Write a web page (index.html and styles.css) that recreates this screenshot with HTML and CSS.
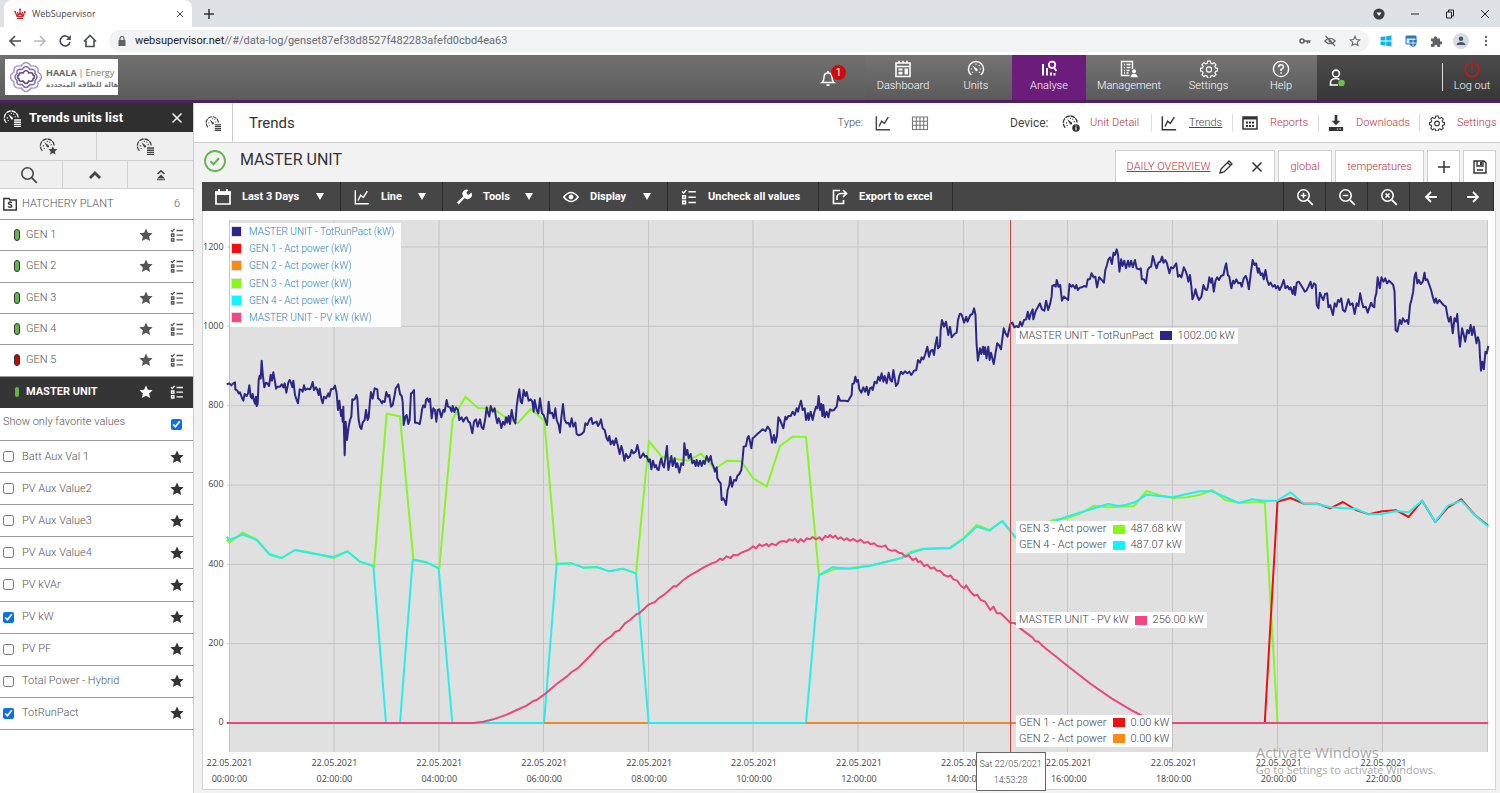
FILE: index.html
```html
<!DOCTYPE html>
<html lang="en">
<head>
<meta charset="utf-8">
<title>WebSupervisor</title>
<link rel="stylesheet" href="styles.css">
</head>
<body>
<svg class="defs" aria-hidden="true">
  <symbol id="gauge" viewBox="0 0 18 18"><path d="M3.6 14.6A7.3 7.3 0 1 1 16 9" fill="none" stroke="currentColor" stroke-width="1.4" stroke-dasharray="5 .8"/><path d="M5.6 5.4l4 3.2a1.3 1.3 0 1 1-1.5 1.5z" fill="currentColor"/><path d="M8.8 4v1.2M11.8 5l-.7 1M4 9.4h1.4M13.5 8l-1.2.5M5 12.5l1-.7" stroke="currentColor" stroke-width="1.1"/></symbol>
  <symbol id="gauge-list" viewBox="0 0 18 18"><use href="#gauge" width="17" height="17"/><path d="M11 11h7M11 13.2h7M11 15.4h7M11 17.4h7" stroke="currentColor" stroke-width="1.4"/></symbol>
  <symbol id="gauge-star" viewBox="0 0 18 18"><use href="#gauge" width="17" height="17"/><path d="M13.8 9.300l1.300 2.700 3 .3-2.200 2.100.6 3.100-2.700-1.500-2.700 1.500.6-3.100-2.200-2.100 3-.3z" fill="currentColor"/></symbol>
  <symbol id="gauge-info" viewBox="0 0 18 18"><use href="#gauge" width="17" height="17"/><circle cx="14" cy="14" r="3.8" fill="currentColor"/><path d="M14 11.5v1M14 13.3v3" stroke="#fff" stroke-width="1.2"/></symbol>
  <symbol id="gauge-full" viewBox="0 0 18 18"><path d="M4.2 15A7.6 7.6 0 1 1 13.8 15" fill="none" stroke="currentColor" stroke-width="1.4"/><path d="M5.6 5.4l4 3.2a1.3 1.3 0 1 1-1.5 1.5zM7 16h4" fill="currentColor"/><path d="M9 3.6v1.2M12.5 5l-.7 1M3.8 9h1.4M14.2 9h-1.4M5 12.8l1-.7M13 12.8l-1-.7" stroke="currentColor" stroke-width="1.2"/></symbol>
  <symbol id="linechart" viewBox="0 0 18 18"><path d="M1.5 1.5v15h15.500M4.500 13l3-6 3 2.500 4.500-7" fill="none" stroke="currentColor" stroke-width="1.6"/></symbol>
  <symbol id="gridicon" viewBox="0 0 18 18"><path d="M1.500 3h15v12.500h-15zM1.500 7.200h15M1.500 11.300h15M5.300 3v12.500M9 3v12.500M12.700 3v12.500" fill="none" stroke="currentColor" stroke-width="1.100"/></symbol>
  <symbol id="gear" viewBox="0 0 18 18"><path d="M7.600 1.200h2.800l.4 2 1.500.6 1.800-1.100 1.900 2-1.100 1.700.6 1.500 2 .4v2.600l-2 .5-.6 1.500 1.100 1.800-1.900 1.900-1.800-1.100-1.500.6-.4 2H7.600l-.4-2-1.500-.6-1.800 1.100L2 14.700l1.100-1.800-.6-1.500-2-.5V8.300l2-.4.6-1.500L2 4.700l1.900-2 1.800 1.100 1.500-.6z" fill="none" stroke="currentColor" stroke-width="1.200"/><circle cx="9" cy="9.500" r="2.600" fill="none" stroke="currentColor" stroke-width="1.200"/></symbol>
  <symbol id="star" viewBox="0 0 14 14"><path d="M7 .6l1.900 4.200 4.700.5-3.500 3.100 1 4.700L7 10.700l-4.100 2.400 1-4.700L.4 5.300l4.700-.5z" fill="currentColor"/></symbol>
  <symbol id="checks" viewBox="0 0 14 14"><path d="M1 2.200l1.300 1.400L4.600.8M6.500 2.500H13M6.500 7.200H13M6.500 11.800H13M1.500 6h2.400v2.400H1.500zM1.500 10.600h2.400V13H1.500z" fill="none" stroke="currentColor" stroke-width="1.300"/></symbol>
  <symbol id="close" viewBox="0 0 12 12"><path d="M1.500 1.500l9 9M10.500 1.500l-9 9" stroke="currentColor" stroke-width="1.500"/></symbol>
  <symbol id="zoomlens" viewBox="0 0 18 18"><circle cx="7.500" cy="7.500" r="5.700" fill="none" stroke="currentColor" stroke-width="1.600"/><path d="M11.800 11.800l5 5" stroke="currentColor" stroke-width="1.800"/></symbol>
</svg>

<div class="tabbar">
  <div class="tab">
    <svg class="i12" viewBox="0 0 12 12"><path d="M3 8.500L1.500 4.500M3 8.500L6 5l3 3.500M4 7L3.500 4M8 7l.5-3M9 8.500l1.500-4M6 5V2M3 10.300h6M3 8.500h6" fill="none" stroke="#d0212b" stroke-width="1.200"/><g fill="#d0212b"><circle cx="6" cy="1.600" r="1"/><circle cx="1.200" cy="4" r="1"/><circle cx="10.800" cy="4" r="1"/></g></svg>
    <span>WebSupervisor</span>
    <button class="plain" aria-label="Close tab"><svg class="i8" viewBox="0 0 12 12"><use href="#close"/></svg></button>
  </div>
  <button class="plain newtab" aria-label="New tab"><svg class="i12" viewBox="0 0 12 12"><path d="M6 1v10M1 6h10" stroke="#333" stroke-width="1.500"/></svg></button>
  <div class="winctl">
    <svg class="i12" viewBox="0 0 12 12"><circle cx="6" cy="6" r="5.600" fill="#3c4043"/><path d="M3.500 4.500h5L6 8z" fill="#fff"/></svg>
    <svg class="i10" viewBox="0 0 10 10"><path d="M1 5h8" stroke="#222"/></svg>
    <svg class="i10" viewBox="0 0 10 10"><path d="M1.500 3h5v6h-5zM3.500 3V1h5v6h-2" fill="none" stroke="#222"/></svg>
    <svg class="i10" viewBox="0 0 10 10"><path d="M1 1l8 8M9 1L1 9" stroke="#222"/></svg>
  </div>
</div>

<div class="addressbar">
  <button class="plain" aria-label="Back"><svg class="i14" viewBox="0 0 14 14"><path d="M13 7H2M7 2L2 7l5 5" fill="none" stroke="#4a4d51" stroke-width="1.600"/></svg></button>
  <button class="plain" aria-label="Forward"><svg class="i14" viewBox="0 0 14 14"><path d="M1 7h11M7 2l5 5-5 5" fill="none" stroke="#b6b8ba" stroke-width="1.600"/></svg></button>
  <button class="plain" aria-label="Reload"><svg class="i14" viewBox="0 0 14 14"><path d="M11.500 4.500A5 5 0 1 0 12 8" fill="none" stroke="#4a4d51" stroke-width="1.600"/><path d="M12.800 1v5H8z" fill="#4a4d51"/></svg></button>
  <button class="plain" aria-label="Home"><svg class="i14" viewBox="0 0 14 14"><path d="M1 7.500L7 1.500l6 6M3 6.500v6h8v-6" fill="none" stroke="#4a4d51" stroke-width="1.600"/></svg></button>
  <div class="omnibox">
    <svg class="i10" viewBox="0 0 10 10"><path d="M1.500 4h7v6h-7z" fill="#5f6368"/><path d="M3 4.500V2.500a2 2 0 0 1 4 0v2" fill="none" stroke="#5f6368" stroke-width="1.200"/></svg>
    <p class="url"><b>websupervisor.net</b>//#/data-log/genset87ef38d8527f482283afefd0cbd4ea63</p>
    <svg class="i12" viewBox="0 0 12 12"><circle cx="3" cy="6" r="2" fill="none" stroke="#5f6368" stroke-width="1.600"/><path d="M5 6h6.500M8.500 6v2.500M10.500 6v2" stroke="#5f6368" stroke-width="1.600"/></svg>
    <svg class="i12" viewBox="0 0 12 12"><path d="M.8 6Q6 .5 11.200 6 6 11.500.8 6zM1.500 1l9.500 10" fill="none" stroke="#5f6368" stroke-width="1.200"/><circle cx="6" cy="6" r="1.500" fill="#5f6368"/></svg>
    <svg class="i12" viewBox="0 0 14 14"><path d="M7 1.500l1.600 3.700 4 .4-3 2.700.9 4L7 10.200l-3.500 2.100.9-4-3-2.700 4-.4z" fill="none" stroke="#5f6368" stroke-width="1.200"/></svg>
  </div>
  <div class="exts">
    <svg class="i12" viewBox="0 0 12 12"><path d="M.5 2L5.500 1.300v4.300h-5zM6.200 1.200L11.500.5v5.100H6.200zM.5 6.400h5v4.300L.5 10zM6.200 6.400h5.300v5.100l-5.300-.7z" fill="#12b2e8"/></svg>
    <svg class="i12" viewBox="0 0 12 12"><path d="M1 1h10v8H1z" fill="#d9ebf8" stroke="#2b78b5"/><path d="M1 1h10v2.500H1z" fill="#2b78b5"/><path d="M4.500 5h7v3q-.5 3-3.500 4-3-1-3.500-4z" fill="#1d75bd"/><path d="M8 5v6.500M4.500 8h7" stroke="#fff" stroke-width=".8"/></svg>
    <svg class="i12" viewBox="0 0 12 12"><path d="M1 3.500h3a1.600 1.600 0 1 1 3 0h3v3a1.500 1.500 0 1 1 0 2.800V12H7.200a1.400 1.400 0 1 0-2.600 0H1V9a1.400 1.400 0 1 0 0-2.700z" fill="#5f6368"/></svg>
    <svg class="i16 avatar" viewBox="0 0 16 16"><circle cx="8" cy="8" r="8" fill="#dadce4"/><circle cx="8" cy="5.800" r="2.200" fill="#4e5268"/><path d="M3.500 12Q4 9 8 9t4.500 3z" fill="#4e5268"/></svg>
    <svg class="i12" viewBox="0 0 12 12"><g fill="#5f6368"><circle cx="6" cy="2" r="1.200"/><circle cx="6" cy="6" r="1.200"/><circle cx="6" cy="10" r="1.200"/></g></svg>
  </div>
</div>

<header class="apphead">
  <div class="logo">
    <svg class="logomark" viewBox="0 0 32 32" fill="none" stroke="#8a6db0"><path d="M11 5Q16-2 21 5q8-1 7 6 7 5 0 10 1 7-7 6-5 7-10 0-8 1-7-6-7-5 0-10-1-7 7-6z" stroke="#a797c0" stroke-width="1.500"/><path d="M12 8.500q4-6 8 0 6-1 5 4 4 3.500 0 7 1 5-5 4-4 6-8 0-6 1-5-4-4-3.500 0-7-1-5 5-4z" stroke-width="1.600"/><path d="M13 12q3-5 6 0 4-1 4 2 3 2 0 4 0 3-4 2-3 5-6 0-4 1-4-2-3-2 0-4 0-3 4-2z" stroke="#5f4a86" stroke-width="1.600"/></svg>
    <div><p class="brand"><b>HAALA</b><span>|</span>Energy</p><p class="brandar" dir="rtl" lang="ar">هالة للطاقة المتجددة</p></div>
  </div>
  <button class="plain bell" aria-label="Notifications"><svg class="i18" viewBox="0 0 18 18"><path d="M3 13.500q2-1.500 2-5 0-4.500 4-4.500t4 4.500q0 3.500 2 5zM9 2v2M7.500 15.500q1.500 1.500 3 0" fill="none" stroke="#fff" stroke-width="1.500"/></svg><span class="badge">1</span></button>
  <nav class="mainnav">
    <a href="#"><svg class="i18" viewBox="0 0 18 18"><path d="M2 3h14v13.500H2zM2 6.500h14M5 .8v3M9 .8v3M13 .8v3" fill="none" stroke="currentColor" stroke-width="1.600"/><path d="M4.500 8.500h4v2h-4zM4.500 11.800h4v2.600h-4zM10.500 8.500h3.500v6h-3.500z" fill="currentColor"/></svg>Dashboard</a>
    <a href="#"><svg class="i18"><use href="#gauge-full"/></svg>Units</a>
    <a href="#" class="active"><svg class="i18" viewBox="0 0 18 18"><path d="M3 4v11.500M7 8v7.500M11 12.500v3M14.500 13v2.500" stroke="currentColor" stroke-width="2"/><circle cx="12" cy="4.800" r="3.200" fill="none" stroke="currentColor" stroke-width="1.800"/><path d="M14 7.500l2.500 3.500" stroke="currentColor" stroke-width="1.800"/></svg>Analyse</a>
    <a href="#"><svg class="i18" viewBox="0 0 18 18"><path d="M9.500 15.500H1.500V1.500h11v7.500M4 4.500h1M6.500 4.500h4M4 7.500h1M6.500 7.500h4M4 10.500h1M6.500 10.500h3M4 13h1M6.500 13h2" fill="none" stroke="currentColor" stroke-width="1.400"/><circle cx="14" cy="11.300" r="2" fill="currentColor"/><path d="M10.500 17.200q.5-3.400 3.500-3.400t3.800 3.400z" fill="currentColor"/></svg>Management</a>
    <a href="#"><svg class="i18"><use href="#gear"/></svg>Settings</a>
    <a href="#"><svg class="i18" viewBox="0 0 18 18"><circle cx="9" cy="9" r="7.600" fill="none" stroke="currentColor" stroke-width="1.400"/><path d="M6.500 7.200Q6.700 4.700 9 4.700t2.400 2.200Q11.400 8.300 9 9.500V11M9 12.200v1.500" fill="none" stroke="currentColor" stroke-width="1.500"/></svg>Help</a>
  </nav>
  <div class="userbox">
    <button class="plain" aria-label="User"><svg class="i18" viewBox="0 0 18 18"><circle cx="8" cy="4.500" r="3.400" fill="none" stroke="#fff" stroke-width="1.600"/><path d="M10 16H2.500v-2.500Q3 9.500 8 9.500q2 0 3.500 1" fill="none" stroke="#fff" stroke-width="1.600"/><circle cx="13.500" cy="14" r="3.300" fill="#6cc04a"/></svg></button>
    <a href="#" class="logout"><svg class="i18" viewBox="0 0 18 18"><path d="M5.500 3.500A7 7 0 1 0 12.500 3.500M9 .5V9" fill="none" stroke="#c01a1a" stroke-width="1.800"/></svg>Log out</a>
  </div>
</header>

<div class="body">
  <aside class="side">
    <div class="sidetitle"><svg class="i18"><use href="#gauge-list"/></svg><h2>Trends units list</h2><button class="plain" aria-label="Close list"><svg class="i12"><use href="#close"/></svg></button></div>
    <div class="pair"><button aria-label="Favourite units"><svg class="i18"><use href="#gauge-star"/></svg></button><button aria-label="All units"><svg class="i18"><use href="#gauge-list"/></svg></button></div>
    <div class="pair three"><button aria-label="Search"><svg class="i18"><use href="#zoomlens"/></svg></button><button aria-label="Collapse"><svg class="i14" viewBox="0 0 14 14"><path d="M2 10l5-5 5 5" fill="none" stroke="currentColor" stroke-width="2.800"/></svg></button><button aria-label="Collapse all"><svg class="i12" viewBox="0 0 12 12"><path d="M2.500 5L6 1.800 9.500 5" fill="none" stroke="currentColor" stroke-width="1.600"/><path d="M6 5.500l4 4H2zM2 10.300h8v1H2z" fill="currentColor"/></svg></button></div>
    <div class="plant"><svg class="i14" viewBox="0 0 14 14"><path d="M.8 1.500H6L7 3h6.300v10H.8z" fill="none" stroke="#333" stroke-width="1.400"/><path d="M8.800 6Q8.500 5 7.200 5T5.400 6.200q0 1 1.700 1.400T8.900 9q0 1.300-1.800 1.300T5.200 9.300" fill="none" stroke="#333" stroke-width="1.400"/></svg><span>HATCHERY PLANT</span><span class="count">6</span></div>
    <ul class="units">
      <li><i class="lamp"></i><span>GEN 1</span><svg class="i14"><use href="#star"/></svg><svg class="i14"><use href="#checks"/></svg></li>
      <li><i class="lamp"></i><span>GEN 2</span><svg class="i14"><use href="#star"/></svg><svg class="i14"><use href="#checks"/></svg></li>
      <li><i class="lamp"></i><span>GEN 3</span><svg class="i14"><use href="#star"/></svg><svg class="i14"><use href="#checks"/></svg></li>
      <li><i class="lamp"></i><span>GEN 4</span><svg class="i14"><use href="#star"/></svg><svg class="i14"><use href="#checks"/></svg></li>
      <li><i class="lamp red"></i><span>GEN 5</span><svg class="i14"><use href="#star"/></svg><svg class="i14"><use href="#checks"/></svg></li>
      <li class="sel"><i class="lamp"></i><span>MASTER UNIT</span><svg class="i14"><use href="#star"/></svg><svg class="i14"><use href="#checks"/></svg></li>
    </ul>
    <label class="favonly"><span>Show only favorite values</span><input type="checkbox" checked></label>
    <ul class="values">
      <li><label><input type="checkbox">Batt Aux Val 1</label><svg class="i14"><use href="#star"/></svg></li>
      <li><label><input type="checkbox">PV Aux Value2</label><svg class="i14"><use href="#star"/></svg></li>
      <li><label><input type="checkbox">PV Aux Value3</label><svg class="i14"><use href="#star"/></svg></li>
      <li><label><input type="checkbox">PV Aux Value4</label><svg class="i14"><use href="#star"/></svg></li>
      <li><label><input type="checkbox">PV kVAr</label><svg class="i14"><use href="#star"/></svg></li>
      <li><label><input type="checkbox" checked>PV kW</label><svg class="i14"><use href="#star"/></svg></li>
      <li><label><input type="checkbox">PV PF</label><svg class="i14"><use href="#star"/></svg></li>
      <li><label><input type="checkbox">Total Power - Hybrid</label><svg class="i14"><use href="#star"/></svg></li>
      <li><label><input type="checkbox" checked>TotRunPact</label><svg class="i14"><use href="#star"/></svg></li>
    </ul>
  </aside>

  <main class="main">
    <div class="subhead">
      <div class="subicon"><svg class="i16"><use href="#gauge-list"/></svg></div>
      <h1>Trends</h1>
      <span class="type">Type:</span>
      <button class="plain" aria-label="Line chart"><svg class="i16"><use href="#linechart"/></svg></button>
      <button class="plain tablebtn" aria-label="Table"><svg class="i18"><use href="#gridicon"/></svg></button>
      <span class="device">Device:</span>
      <nav class="devnav">
        <a href="#"><svg class="i18"><use href="#gauge-info"/></svg><span>Unit Detail</span></a>
        <a href="#" class="current"><svg class="i16"><use href="#linechart"/></svg><span>Trends</span></a>
        <a href="#"><svg class="i16" viewBox="0 0 16 16"><path d="M1 2h14v12H1z" fill="none" stroke="currentColor" stroke-width="1.500"/><path d="M1 2h14v2.500H1zM4 6.500h2v2H4zM7 6.500h2v2H7zM10 6.500h2v2h-2zM4 10h2v2H4zM7 10h2v2H7zM10 10h2v2h-2z" fill="currentColor"/></svg><span>Reports</span></a>
        <a href="#"><svg class="i16" viewBox="0 0 18 18"><path d="M7.500 0h3v6.500h3.200L9 11.500 4.300 6.500h3.200zM1 13.500h16V18H1z" fill="currentColor"/><path d="M10 15.800h1.500M13 15.800h1.500" stroke="#fff" stroke-width="1.200"/></svg><span>Downloads</span></a>
        <a href="#"><svg class="i16"><use href="#gear"/></svg><span>Settings</span></a>
      </nav>
    </div>

    <div class="unitbar">
      <svg class="i22" viewBox="0 0 22 22"><circle cx="11" cy="11" r="10" fill="none" stroke="#62b74a" stroke-width="1.800"/><path d="M6.500 11.300l3 3 5.500-6" fill="none" stroke="#62b74a" stroke-width="2"/></svg>
      <h2>MASTER UNIT</h2>
      <div class="views">
        <div class="view first"><a href="#" class="on">DAILY OVERVIEW</a><button class="plain" aria-label="Rename"><svg class="i14" viewBox="0 0 14 14"><path d="M1 13l1-4 8-8 3 3-8 8zM8.500 2.500l3 3" fill="none" stroke="currentColor" stroke-width="1.300"/></svg></button><button class="plain" aria-label="Remove"><svg class="i12"><use href="#close"/></svg></button></div>
        <div class="view"><a href="#">global</a></div>
        <div class="view wide"><a href="#">temperatures</a></div>
        <button class="view" aria-label="Add view"><svg class="i14" viewBox="0 0 14 14"><path d="M7 1v12M1 7h12" stroke="currentColor" stroke-width="1.500"/></svg></button>
        <button class="view" aria-label="Save view"><svg class="i14" viewBox="0 0 14 14"><path d="M1 1h10l2 2v10H1zM4 1v5h6V1M4 10h6" fill="none" stroke="currentColor" stroke-width="1.400"/><path d="M7 2h2v3H7z" fill="currentColor"/></svg></button>
      </div>
    </div>

    <div class="tools">
      <button><svg class="i16" viewBox="0 0 16 16"><path d="M1 3h14v12H1z" fill="none" stroke="currentColor" stroke-width="1.700"/><path d="M0 2.500h3V0h2v2.500h6V0h2v2.500h3V6H0z" fill="currentColor"/></svg><span>Last 3 Days</span><i class="caret"></i></button>
      <button><svg class="i16"><use href="#linechart"/></svg><span>Line</span><i class="caret"></i></button>
      <button><svg class="i16" viewBox="0 0 16 16"><path d="M.8 13.500l6.500-6A4.300 4.300 0 0 1 12.600 1L10.500 3.200l.5 2 2 .5L15.200 3.500A4.300 4.300 0 0 1 8.700 9l-6 6.500z" fill="currentColor"/></svg><span>Tools</span><i class="caret"></i></button>
      <button><svg class="i16" viewBox="0 0 16 16"><path d="M.8 8Q8-1 15.200 8 8 17 .8 8z" fill="none" stroke="currentColor" stroke-width="1.600"/><circle cx="8" cy="8" r="2.400" fill="currentColor"/></svg><span>Display</span><i class="caret"></i></button>
      <button><svg class="i16" viewBox="0 0 14 14"><use href="#checks"/></svg><span>Uncheck all values</span></button>
      <button><svg class="i16" viewBox="0 0 16 16"><path d="M8 1.500H1.500v13h10V11M5 11V8q0-3 4-3.500h5M11 1l3.500 3.500L11 8" fill="none" stroke="currentColor" stroke-width="1.700"/></svg><span>Export to excel</span></button>
      <div></div>
      <button class="sq" aria-label="Zoom in"><svg class="i18" viewBox="0 0 18 18"><use href="#zoomlens"/><path d="M7.500 4.700v5.600M4.700 7.500h5.600" stroke="currentColor" stroke-width="1.400"/></svg></button>
      <button class="sq" aria-label="Zoom out"><svg class="i18" viewBox="0 0 18 18"><use href="#zoomlens"/><path d="M4.700 7.500h5.600" stroke="currentColor" stroke-width="1.400"/></svg></button>
      <button class="sq" aria-label="Reset zoom"><svg class="i18" viewBox="0 0 18 18"><use href="#zoomlens"/><path d="M5.500 5.500l4 4M9.500 5.500l-4 4" stroke="currentColor" stroke-width="1.600"/></svg></button>
      <button class="sq" aria-label="Previous"><svg class="i14" viewBox="0 0 14 14"><path d="M13 7H2M7 2L2 7l5 5" fill="none" stroke="currentColor" stroke-width="1.800"/></svg></button>
      <button class="sq" aria-label="Next"><svg class="i14" viewBox="0 0 14 14"><path d="M1 7h11M7 2l5 5-5 5" fill="none" stroke="currentColor" stroke-width="1.800"/></svg></button>
    </div>

    <section class="card">
      <div class="yaxis"><span>1200</span><span>1000</span><span>800</span><span>600</span><span>400</span><span>200</span><span>0</span></div>
      <div class="plot">
        <svg class="chart" viewBox="0 0 1259 532" preserveAspectRatio="none" role="img" aria-label="Power trends">
          <path class="gridline" d="M-2 27H1259M-2 106.300H1259M-2 185.700H1259M-2 265H1259M-2 344.300H1259M-2 423.700H1259M-2 503H1259M.5 0V532M105 0V532M210 0V532M314.500 0V532M419.500 0V532M524 0V532M629 0V532M734.500 0V532M838.500 0V532M943.500 0V532M1048.500 0V532M1153.500 0V532M1258.500 0V532"/>
          <g class="series green">
            <g transform="translate(-9 110) scale(.33333)"><polyline points="20,628 28,638 68,608 110,628 148,674 185,684 225,660 265,666 340,684 382,664 420,695 462,710 500,251 540,259 580,688 620,697 658,715 698,268 736,200 775,235 820,235 855,262 893,280 932,237 973,272 1010,702 1055,700 1090,713 1130,711 1168,724 1208,716 1248,730 1287,333 1325,380 1405,392 1443,371 1484,417 1522,392 1564,394 1600,445 1640,470 1680,348 1718,320 1758,320 1797,736 1840,718 1890,715 1960,705 2045,683 2075,665 2110,656 2190,653 2230,625 2270,585 2308,600 2347,573 2387,625"/></g>
            <g transform="translate(731 240) scale(.34435 .33333)"><polyline points="163,233 200,215 235,198 270,180 310,175 350,160 390,137 430,142 505,138 542,93 580,106 618,114 660,112 695,105 732,90 770,120 810,128 885,125 922,788"/></g>
          </g>
          <g class="series dark"><g transform="translate(-9 110) scale(.33333)"><polyline points="20,163 28,160 34,166 40,160 45,157 46,178 52,182 56,190 60,187 66,204 70,212 74,192 80,198 84,190 88,166 92,200 96,205 98,192 102,212 106,222 108,200 110,228 113,222 116,150 119,137 122,146 125,92 128,130 133,172 138,158 142,160 147,168 152,134 156,152 160,127 165,155 168,176 172,170 180,170 185,163 190,172 194,160 199,188 205,158 209,150 213,158 217,172 220,152 225,195 230,210 234,220 239,178 245,180 248,185 252,166 256,180 263,176 270,178 274,170 278,156 282,180 288,172 292,180 296,195 299,176 304,206 308,220 312,200 318,205 325,190 328,200 333,178 340,176 345,167 350,190 354,240 358,212 363,258 366,240 368,275 370,230 374,376 377,275 381,330 386,290 390,270 394,260 397,208 400,210 405,206 409,195 412,205 416,270 420,290 424,297 428,278 434,270 438,240 443,270 446,262 450,212 453,186 458,206 464,175 472,178 474,205 480,210 486,220 489,213 494,216 499,186 504,200 508,195 513,230 518,225 524,195 527,175 531,170 535,163 540,192 545,198 548,215 551,285 556,260 560,255 565,282 569,270 573,190 577,188 582,180 585,278 590,278 595,280 599,282 603,262 606,238 610,226 615,232 618,210 622,205 626,215 630,206 635,265 640,235 645,240 649,275 653,240 658,238 664,262 670,240 674,245 680,210 684,230 690,232 695,245 698,228 703,246 708,232 714,240 718,270 725,262 730,275 735,265 740,262 745,275 750,278 757,310 762,275 768,268 773,290 780,268 785,292 790,297 796,265 800,232 803,245 808,260 812,228 818,245 824,235 828,262 832,280 836,265 840,275 844,294 849,275 854,284 858,262 862,278 866,258 870,282 875,240 880,268 886,280 890,230 894,200 898,178 902,215 906,220 911,180 916,198 920,186 926,212 932,208 937,215 941,245 944,210 950,240 955,250 960,205 966,250 971,255 976,270 981,285 986,215 990,250 996,248 1001,265 1006,235 1010,270 1016,285 1020,308 1024,262 1029,222 1034,270 1040,280 1045,278 1050,290 1055,265 1060,290 1066,278 1070,312 1076,316 1085,312 1092,305 1096,280 1102,285 1108,270 1114,264 1118,282 1124,278 1130,275 1134,288 1138,282 1143,268 1148,295 1154,300 1160,325 1164,332 1168,318 1172,343 1178,332 1182,345 1188,325 1193,345 1199,372 1204,348 1208,362 1213,392 1218,372 1224,384 1230,378 1235,360 1240,370 1247,365 1252,345 1256,362 1260,385"/></g>
          <g transform="translate(391 110) scale(.33333)"><polyline points="60,385 64,380 70,370 75,380 80,378 86,395 90,388 94,418 99,392 104,412 108,405 112,418 116,420 120,398 124,385 128,405 132,412 136,385 141,348 145,420 150,395 154,378 158,408 164,385 168,412 172,400 178,428 184,400 190,405 193,340 198,375 202,360 206,385 212,372 217,400 222,392 227,408 230,390 235,408 240,392 245,408 250,392 254,402 260,378 266,395 272,378 276,400 280,408 285,425 290,412 292,445 298,455 302,460 305,510 310,505 315,515 318,525 323,480 328,465 331,440 336,470 342,450 348,452 352,438 358,432 364,420 368,385 371,350 378,348 382,325 386,318 390,335 394,355 398,325 404,320 412,312 420,305 428,298 436,303 443,290 450,300 456,338 462,315 466,338 471,318 475,262 480,270 485,282 490,295 496,260 500,268 505,258 512,258 518,245 524,255 530,235 534,245 539,225 543,212 548,240 554,235 558,270 564,250 566,270 572,245 578,270 582,250 588,230 592,235 596,198 600,240 604,222 607,258 610,225 614,262 620,245 625,262 630,238 636,242 642,240 650,230 655,198 660,212 668,212 676,212 684,214 690,203 695,195 697,162 702,160 706,140 710,155 714,150 718,178 724,188 730,172 735,185 740,170 745,195 750,175 755,172 758,180 764,155 770,160 775,140 780,152 785,130 790,155 794,138 800,160 806,128 811,150 816,155 820,120 828,168 834,160 838,138 843,125 848,132 855,124 862,130 868,125 874,135 882,122 889,120 894,90 900,98 905,82 910,88 915,75 922,50 927,80 932,62 938,60 942,75 946,45 951,22 954,55 960,48 962,0 966,-30 972,-10 978,-25 985,15 990,-10 995,22 1003,12 1010,8 1014,-30 1020,-50"/></g>
          <g transform="translate(731 0) scale(.34435 .33333)"><polyline points="0,280 5,285 12,308 18,290 22,305 30,285 36,282 41,265 45,285 48,370 52,422 58,385 62,402 67,380 70,402 73,382 77,415 82,380 86,420 90,398 98,432 103,400 108,370 113,375 119,388 127,325 132,340 138,350 146,312 152,308 158,322 164,318 170,322 175,305 180,318 186,300 192,298 197,275 201,298 206,280 211,268 213,298 220,272 226,262 232,250 238,268 245,272 250,242 256,270 262,250 266,230 268,198 274,195 278,200 281,180 286,200 291,195 296,242 302,230 308,235 314,240 318,192 324,200 328,195 334,205 338,195 342,210 348,203 354,202 360,198 367,200 371,178 377,178 382,160 388,172 393,170 398,202 404,172 410,178 418,188 422,150 426,138 431,118 436,112 441,132 446,98 450,105 455,88 459,105 463,155 468,118 472,138 477,122 482,145 488,122 492,140 497,122 502,142 508,120 513,145 520,148 525,145 528,178 534,178 540,190 545,150 550,142 555,140 560,108 566,130 571,145 576,128 582,125 587,110 591,128 596,120 601,130 608,160 613,142 619,145 623,138 628,130 633,170 638,165 643,172 650,142 656,155 660,168 663,185 668,165 672,200 675,238 680,225 684,208 688,225 694,240 701,230 707,195 712,208 717,210 720,200 724,172 729,188 732,175 737,215 742,182 747,172 752,180 758,168 765,165 769,145 773,130 778,165 782,170 788,205 793,182 797,190 802,178 808,190 814,188 818,200 824,175 830,168 834,180 839,208 845,155 850,120 855,135 860,130 865,158 868,145 873,165 878,160 882,178 887,150 892,180 897,195 902,188 908,200 914,195 918,205 923,198 928,210 934,198 940,180 945,205 951,198 956,208 960,202 966,222 970,200 973,225 978,188 984,185 990,195 996,205 1001,215 1006,212 1012,200 1018,185 1022,205 1028,190 1033,195 1036,255 1041,265 1045,218 1050,230 1055,240 1060,222 1066,220 1070,262 1075,255 1083,285 1088,250 1093,260 1098,240 1103,245 1107,235 1112,270 1118,275 1122,260 1128,238 1133,255 1140,250 1146,282 1152,250 1157,258 1162,220 1167,245 1171,262 1178,260 1184,278 1189,262 1194,248 1198,258 1203,262 1205,235 1209,220 1213,172 1219,205 1224,172 1230,185 1235,175 1240,190 1246,182 1252,188 1258,195 1262,215 1265,330 1270,335 1277,300 1282,312 1286,295 1292,305 1298,300 1302,312 1307,255 1311,240 1316,215 1320,170 1324,158 1328,190 1332,180 1338,192 1344,185 1349,158 1352,180 1357,178 1363,195 1368,210 1374,235 1378,248 1382,235 1386,250 1392,240 1398,248 1404,255 1411,260 1416,290 1420,305 1425,290 1431,340 1436,295 1441,305 1444,282 1448,340 1452,380 1458,325 1463,345 1467,365 1473,330 1478,340 1483,315 1487,345 1492,320 1496,345 1500,370 1504,352 1508,365 1510,410 1513,452 1517,425 1521,448 1526,395 1530,400 1534,378"/></g></g>
          <g class="series red" transform="translate(731 240) scale(.34435 .33333)"><polyline points="885,789 922,125 960,114 998,131 1037,131 1075,145 1112,126 1150,150 1188,163 1226,154 1267,151 1303,171 1342,122 1380,186 1417,142 1456,118 1495,165 1534,197"/></g>
          <g class="series cyan">
            <g transform="translate(-9 110) scale(.33333)"><polyline points="20,620 28,630 68,614 110,630 148,672 185,684 225,660 265,668 340,681 382,664 420,695 460,707 498,1179 540,1179 578,690 620,697 656,715 697,1179 972,1179 1010,702 1055,700 1090,713 1130,711 1168,724 1208,716 1248,730 1286,1179 1758,1179 1797,736 1836,712 1890,716 1950,707 2000,695 2045,684 2075,668 2110,657 2190,655 2230,627 2270,590 2308,602 2347,573 2387,622"/></g>
            <g transform="translate(731 240) scale(.34435 .33333)"><polyline points="163,233 200,218 235,202 270,186 310,170 430,132 460,138 480,135 508,127 542,104 618,112 695,94 732,94 810,129 848,118 885,122 922,122 960,97 998,131 1037,132 1075,142 1150,147 1188,163 1226,162 1267,153 1303,157 1342,122 1380,186 1417,137 1456,122 1495,165 1534,200"/></g>
          </g>
          <path class="series orange" d="M315 503H419M577 503H790"/>
          <g class="series pink">
            <g transform="translate(-29 360) scale(.33333)"><polyline points="80,429 820,429 850,425 880,418 920,404 950,390 980,377 1000,363 1010,360 1032,344 1042,336 1070,312 1100,290 1115,276 1133,265 1170,228 1200,195 1220,178 1235,168 1245,156 1258,151 1275,130 1290,120 1310,102 1318,100 1345,74 1365,66 1375,56 1395,42 1422,18 1428,20 1450,0"/></g>
            <g transform="translate(391 110) scale(.33333)"><polyline points="190,750 210,736 230,725 250,713 275,700 288,696 300,686 308,690 320,679 332,684 340,675 352,676 366,667 385,660 400,649 408,655 418,643 426,648 440,642 446,649 455,641 468,646 478,636 490,633 500,636 508,628 518,632 524,626 534,637 542,627 552,635 560,625 570,628 578,621 588,628 598,622 606,630 616,618 624,622 630,615 638,623 646,617 654,627 662,622 672,630 680,625 690,632 700,627 712,635 722,629 732,638 744,636 752,643 762,640 772,648 786,650 796,646 804,658 815,662 826,661 836,668 846,670 856,680 866,676 878,690 888,685 894,696 902,694 912,708 922,704 932,716 942,712 950,722 960,722 972,735 984,740 992,736 1000,748 1012,752 1020,765"/></g>
            <g transform="translate(731 240) scale(.34435 .33333)"><polyline points="0,375 12,385 18,376 30,395 42,407 50,404 60,420 72,424 88,450 97,440 107,460 118,460 130,472 146,488 160,490 175,505 210,532 218,543 228,545 240,558 310,616 380,672 440,715 500,752 530,768 570,785 600,789 1534,789"/></g>
          </g>
          <path class="cursorline" d="M781.500 0V532"/>
        </svg>
        <table class="legend">
          <tr><td><i class="sw c-dark"></i></td><td>MASTER UNIT - TotRunPact (kW)</td></tr>
          <tr><td><i class="sw c-red"></i></td><td>GEN 1 - Act power (kW)</td></tr>
          <tr><td><i class="sw c-orange"></i></td><td>GEN 2 - Act power (kW)</td></tr>
          <tr><td><i class="sw c-green"></i></td><td>GEN 3 - Act power (kW)</td></tr>
          <tr><td><i class="sw c-cyan"></i></td><td>GEN 4 - Act power (kW)</td></tr>
          <tr><td><i class="sw c-pink"></i></td><td>MASTER UNIT - PV kW (kW)</td></tr>
        </table>
        <div class="tip t1"><p>MASTER UNIT - TotRunPact<i class="c-dark"></i>1002.00 kW</p></div>
        <div class="tip t2"><p>GEN 3 - Act power<i class="c-green"></i>487.68 kW</p><p>GEN 4 - Act power<i class="c-cyan"></i>487.07 kW</p></div>
        <div class="tip t3"><p>MASTER UNIT - PV kW<i class="c-pink"></i>256.00 kW</p></div>
        <div class="tip t4"><p>GEN 1 - Act power<i class="c-red"></i>0.00 kW</p><p>GEN 2 - Act power<i class="c-orange"></i>0.00 kW</p></div>
        <div class="timebox">Sat 22/05/2021<br>14:53:28</div>
      </div>
      <div class="xaxis">
        <span>22.05.2021<br>00:00:00</span><span>22.05.2021<br>02:00:00</span><span>22.05.2021<br>04:00:00</span><span>22.05.2021<br>06:00:00</span><span>22.05.2021<br>08:00:00</span><span>22.05.2021<br>10:00:00</span><span>22.05.2021<br>12:00:00</span><span>22.05.2021<br>14:00:00</span><span>22.05.2021<br>16:00:00</span><span>22.05.2021<br>18:00:00</span><span>22.05.2021<br>20:00:00</span><span>22.05.2021<br>22:00:00</span>
      </div>
    </section>
  </main>
</div>
<div class="watermark"><p>Activate Windows</p><p class="small">Go to Settings to activate Windows.</p></div>
</body>
</html>
```

FILE: styles.css
```css
* { box-sizing: border-box; }
body { margin: 0; height: 100vh; overflow: hidden; display: flex; flex-direction: column; font: 300 11px/16px Roboto, "Liberation Sans", sans-serif; color: #444; background: #f2f2f2; }
h1, h2, p, ul { margin: 0; padding: 0; list-style: none; }
h1, h2 { font-weight: 400; }
a { color: #b9303c; text-decoration: none; }
button { font: inherit; color: inherit; cursor: pointer; }
svg { display: block; flex: none; }
.defs { position: absolute; width: 0; height: 0; }
.i8 { width: 8px; height: 8px; }
.i10 { width: 10px; height: 10px; }
.i12 { width: 12px; height: 12px; }
.i14 { width: 14px; height: 14px; }
.i16 { width: 16px; height: 16px; }
.i18 { width: 18px; height: 18px; }
.i22 { width: 22px; height: 22px; }
.plain { border: 0; background: none; padding: 0; display: flex; align-items: center; justify-content: center; }

/* browser frame */
.tabbar { height: 27px; flex: none; background: #dee1e6; display: flex; align-items: center; font: 400 9px/14px "Open Sans", "Noto Sans", sans-serif; color: #45484c; }
.tab { align-self: stretch; width: 188px; margin-left: 4px; padding: 0 8px 0 10px; background: #fff; border-radius: 8px 8px 0 0; display: flex; align-items: center; gap: 6px; }
.tab span { flex: 1; }
.newtab { margin-left: 11px; }
.winctl { margin-left: auto; padding-right: 10px; display: flex; align-items: center; gap: 25px; }
.addressbar { height: 28px; flex: none; background: #fff; display: flex; align-items: center; gap: 11px; padding: 0 8px; }
.omnibox { flex: 1; height: 22px; border-radius: 11px; background: #f1f3f4; display: flex; align-items: center; gap: 13px; padding: 0 8px; margin-left: 1px; }
.url { flex: 1; font: 400 11px/16px Roboto, "Noto Sans", sans-serif; color: #6a6d71; margin-left: -5px; }
.url b { font-weight: 400; color: #202124; }
.exts { display: flex; align-items: center; gap: 13px; }
.avatar { margin: 0 -2px; }

/* application header */
.apphead { height: 48px; flex: none; display: flex; background: linear-gradient(#707070, #5c5c5c); border-bottom: 3px solid #4f2060; color: #fff; }
.logo { width: 113px; height: 36px; margin: 4px 0 0 5px; background: #fff; display: flex; align-items: center; gap: 4px; padding: 0 3px 0 5px; color: #777; }
.logomark { width: 32px; height: 32px; }
.brand { font: 400 9px/12px "Open Sans", sans-serif; padding-top: 4px; display: flex; gap: 2px; white-space: nowrap; }
.brand b { font-weight: 700; color: #666; }
.brandar { font: 700 7px/12px "DejaVu Sans", sans-serif; white-space: nowrap; color: #777; }
.bell { margin-left: auto; width: 24px; margin-right: 26px; position: relative; }
.badge { position: absolute; left: 15px; top: 10px; width: 15px; height: 15px; border-radius: 8px; background: #d30909; font-size: 10px; line-height: 15px; font-weight: 400; }
.mainnav { display: grid; grid-template-columns: 74px 72px 74px 86px 73px 72px; }
.mainnav a, .logout { color: #fff; display: flex; flex-direction: column; align-items: center; gap: 0; padding-top: 5px; }
.mainnav a { background: linear-gradient(#747474, #5a5a5a); }
.mainnav .active { background: #6c1d7c; }
.userbox { width: 183px; background: linear-gradient(#4c4c4c, #373737); display: flex; justify-content: space-between; align-items: flex-start; padding-left: 11px; }
.userbox .plain { height: 45px; }
.logout { width: 58px; position: relative; padding-left: 2px; }
.logout::before { content: ""; position: absolute; left: 0; top: 8px; width: 1px; height: 28px; background: #ddd; }

.body { flex: 1; display: flex; min-height: 0; }

/* sidebar */
.side { width: 194px; flex: none; background: #fff; border-right: 1px solid #ccc; color: #555; }
.sidetitle { height: 29px; background: #2f2f2f; color: #fff; display: flex; align-items: center; padding: 0 10px 0 3px; gap: 8px; }
.sidetitle h2 { flex: 1; font-size: 13px; font-weight: 700; }
.pair { display: grid; grid-template-columns: 1fr 1fr; height: 29px; }
.pair.three { grid-template-columns: 63px 65px 1fr; height: 28px; }
.pair button { border: 0; border-right: 1px solid #d0d0d0; border-bottom: 1px solid #d0d0d0; background: #efefef; padding: 0; display: grid; place-items: center; color: #444; }
.pair.three button:first-child { padding-right: 4px; }
.pair button:last-child { border-right: 0; }
.plant { height: 31px; border-bottom: 1px solid #999; display: flex; align-items: center; gap: 5px; padding: 0 13px 0 3px; }
.count { margin-left: auto; }
.units { display: grid; grid-auto-rows: 1fr; min-height: 188px; }
.units li { display: flex; align-items: center; border-bottom: 1px solid #999; padding: 0 9px 0 14px; }
.units span { flex: 1; margin-left: 6px; }
.units svg { color: #555; }
.units svg + svg { margin-left: 17px; }
.lamp { width: 6px; height: 12px; border: 1px solid #333; border-radius: 3px; background: #62b74a; }
.lamp.red { background: #c8060c; }
.units .sel { background: #353535; color: #fff; border-color: #353535; }
.units .sel span { font-weight: 700; }
.units .sel svg { color: #fff; }
input { width: 11px; height: 11px; margin: 0; accent-color: #0b6fe8; }
.favonly { height: 33px; border-bottom: 1px solid #999; display: flex; justify-content: space-between; padding: 6px 11px 0 3px; }
.favonly input { margin-top: 5px; }
.values { display: grid; grid-auto-rows: 1fr; min-height: 289px; }
.values li { display: flex; align-items: center; justify-content: space-between; border-bottom: 1px solid #999; padding: 0 9px 0 3px; color: #333; }
.values label { display: flex; align-items: center; gap: 8px; color: #555; }

/* main area */
.main { flex: 1; min-width: 0; display: flex; flex-direction: column; }
.subhead { height: 40px; flex: none; background: #fff; border-bottom: 1px solid #d0d0d0; display: flex; align-items: center; color: #444; }
.subicon { width: 39px; align-self: stretch; display: grid; place-items: center; border-right: 1px solid #ccc; }
.subhead h1 { font-size: 15px; line-height: 20px; color: #333; padding-left: 16px; flex: 1; }
.type { margin-right: 12px; }
.tablebtn { margin: 0 81px 0 20px; color: #777; }
.device { font-weight: 400; font-size: 12px; width: 52px; }
.devnav { display: grid; grid-template-columns: 89px 81px 86px 101px 81px; }
.devnav a { display: flex; align-items: center; gap: 12px; border-left: 1px solid #ddd; padding-left: 9px; }
.devnav a:first-child { border: 0; padding-left: 0; gap: 10px; }
.devnav svg { color: #333; }
.devnav .current { color: #444; text-decoration: underline; }
.unitbar { height: 39px; flex: none; display: flex; padding-left: 10px; }
.unitbar .i22 { margin-top: 7px; }
.unitbar h2 { font-size: 16px; line-height: 20px; color: #333; margin: 7px 0 0 14px; flex: 1; }
.views { display: flex; gap: 3px; padding: 7px 4px 0 0; align-items: stretch; }
.view { background: #fff; border: 1px solid #d0d0d0; border-bottom: 0; display: flex; align-items: center; justify-content: center; padding: 0; width: 33px; color: #333; }
.views div.view { width: 54px; }
.views .first.view { width: 160px; gap: 9px; }
.views .first .i12 { margin-left: 9px; }
.views .wide.view { width: 89px; }
.on { text-decoration: underline; }
.tools { height: 29px; flex: none; margin: 0 6px 0 8px; background: #464646; color: #fff; display: grid; grid-template-columns: 139px 102px 107px 118px 151px 134px 1fr repeat(5, 42px); }
.tools button { border: 0; border-right: 1px solid #2c2c2c; background: none; padding: 0 16px 0 13px; display: flex; align-items: center; font-weight: 700; }
.tools .sq { padding: 0; justify-content: center; }
.tools div { border-right: 1px solid #2c2c2c; }
.tools span { margin-left: 11px; }
.caret { border: 4px solid transparent; border-top: 7px solid #fff; border-bottom: 0; margin-left: auto; }

/* chart */
.card { flex: 1; min-height: 0; margin: 0 4px 3px 8px; background: #fff; border: 1px solid #d4d4d4; border-top: 0; padding: 9px 7px 0 0; display: grid; grid-template-columns: 26px 1fr; grid-template-rows: 1fr 37px; }
.yaxis { display: grid; grid-auto-rows: 1fr; align-items: center; justify-items: end; margin: -13px 6px -10px 0; font: 400 9px/12px "Open Sans", "Noto Sans", sans-serif; }
.plot { position: relative; background: #e0e0e0; min-height: 0; }
.chart { position: absolute; width: 100%; height: 100%; overflow: visible; }
.gridline { stroke: #c4c4c4; stroke-width: 1; vector-effect: non-scaling-stroke; }
.series { fill: none; stroke-width: 2px; stroke-linejoin: round; }
.series polyline { vector-effect: non-scaling-stroke; }
.series.dark { stroke: #2c2787; }
.series.green { stroke: #86f626; }
.series.red { stroke: #ec1010; }
.series.cyan { stroke: #26eeee; }
.series.orange { stroke: #e88a2c; }
.series.pink { stroke: #e8487a; }
.cursorline { stroke: #cc4444; vector-effect: non-scaling-stroke; }
.c-dark { background: #2c2787; }
.c-red { background: #f01010; }
.c-orange { background: #fb8a14; }
.c-green { background: #86f914; }
.c-cyan { background: #10f4fb; }
.c-pink { background: #f64684; }
.legend { position: absolute; left: 1px; top: 3px; width: 171px; background: #fdfdfd; border-collapse: collapse; font-size: 10px; line-height: 13px; color: #1d86b5; }
.legend td { padding: 2px 0; }
.legend td:first-child { width: 19px; padding-left: 2px; }
.legend tr:nth-child(3n) td { padding-bottom: 3px; }
.sw { display: block; width: 9px; height: 9px; outline: 1px solid #ddd; }
.tip { position: absolute; left: 62.500%; background: #fff; padding: 0 3px; line-height: 16px; white-space: nowrap; }
.tip p { display: flex; align-items: center; }
.tip i { width: 12px; height: 9px; margin: 0 6px; }
.t1 { top: 20.300%; }
.t2 { top: 56.600%; }
.t3 { top: 73.700%; }
.t4 { top: 93%; }
.timebox { position: absolute; left: 59.300%; top: 100%; z-index: 1; width: 70px; height: 39px; border: 1px solid #666; background: #fff; text-align: center; font-size: 9px; line-height: 16px; padding-top: 3px; white-space: nowrap; }
.xaxis { grid-column: 2; display: grid; grid-template-columns: repeat(12, 1fr); margin: 3px 52px 0 -52px; text-align: center; font: 400 9px/16px "Open Sans", "Noto Sans", sans-serif; width: 100%; }
.watermark { position: absolute; right: 64px; bottom: 15px; font: 400 15px/20px "Open Sans", "Noto Sans", sans-serif; color: #a9a9a9; }
.watermark .small { font-size: 11px; line-height: 16px; }
```
